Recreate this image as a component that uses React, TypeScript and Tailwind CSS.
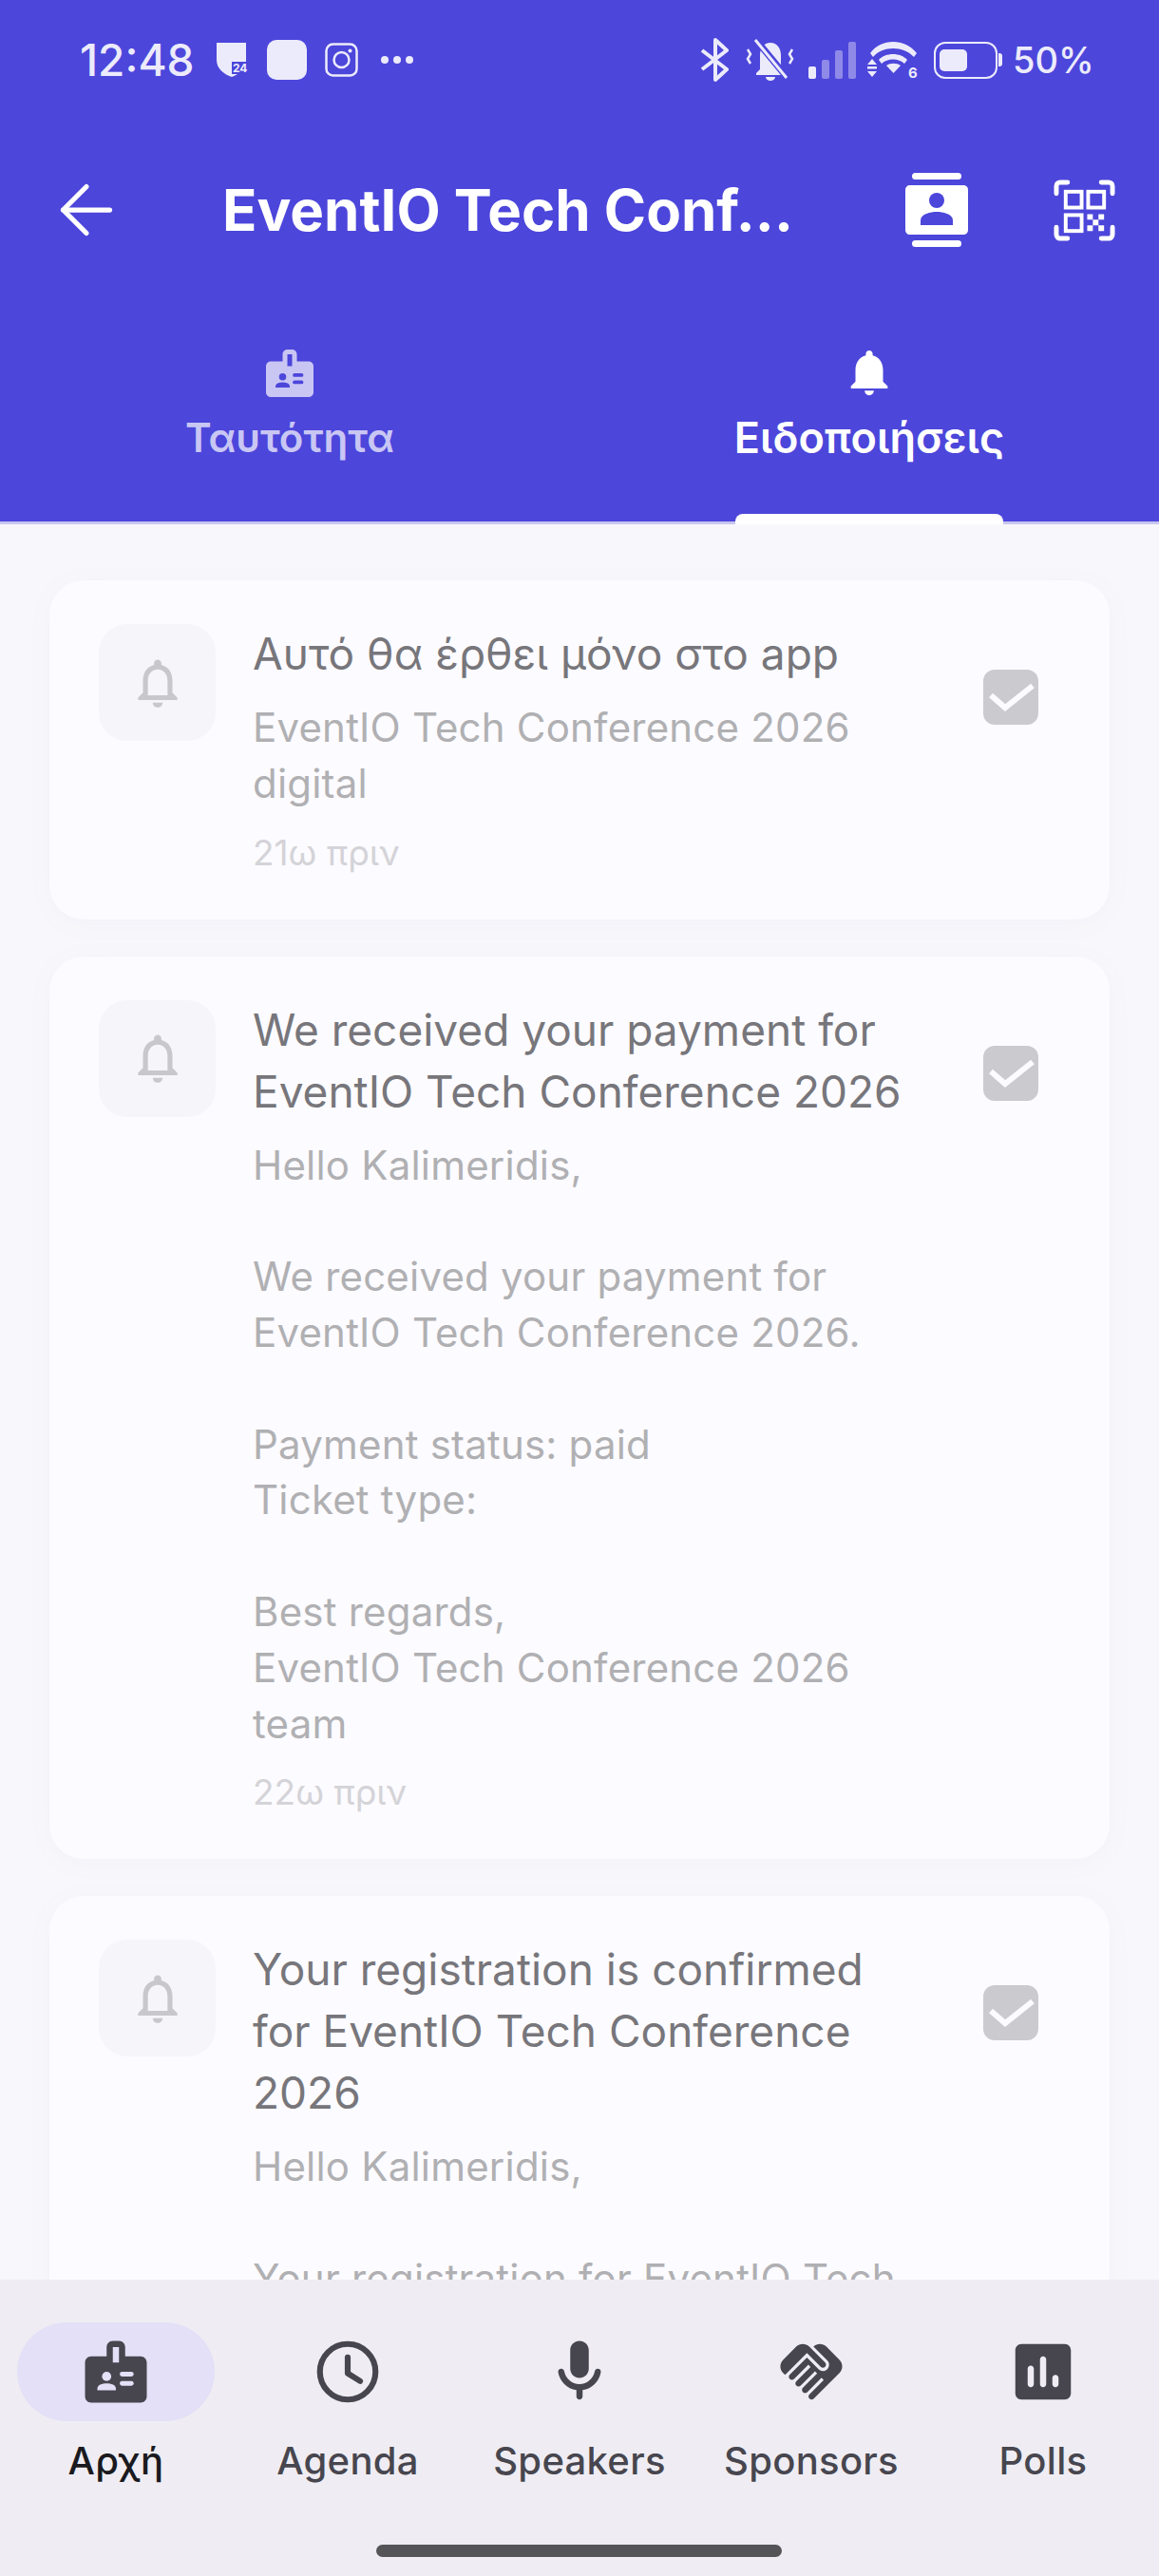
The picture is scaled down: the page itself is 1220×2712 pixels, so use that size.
import { ArrowLeft } from "lucide-react";

const BLUE = "#4c46db";

function Bell({ className }: { className?: string }) {
  return (
    <svg viewBox="0 0 24 24" className={className} fill="currentColor">
      <path d="M12 22c1.100 0 2-.9 2-2h-4c0 1.100.9 2 2 2zm6-6v-5c0-3.070-1.630-5.640-4.500-6.320V4c0-.83-.67-1.500-1.500-1.500s-1.500.67-1.500 1.500v.68C7.640 5.360 6 7.920 6 11v5l-2 2v1h16v-1l-2-2z" />
    </svg>
  );
}

function BellOutline({ className }: { className?: string }) {
  return (
    <svg viewBox="0 0 24 24" className={className} fill="currentColor">
      <path d="M12 22c1.100 0 2-.9 2-2h-4c0 1.100.9 2 2 2zm6-6v-5c0-3.070-1.630-5.640-4.500-6.320V4c0-.83-.67-1.500-1.500-1.500s-1.500.67-1.500 1.500v.68C7.640 5.360 6 7.920 6 11v5l-2 2v1h16v-1l-2-2zm-2 1H8v-6c0-2.480 1.510-4.500 4-4.500s4 2.020 4 4.500v6z" />
    </svg>
  );
}

function Badge({ className, hole }: { className?: string; hole: string }) {
  return (
    <svg viewBox="0 0 24 24" className={className}>
      <path
        fill="currentColor"
        d="M20 7h-5V4c0-1.100-.9-2-2-2h-2c-1.100 0-2 .9-2 2v3H4c-1.100 0-2 .9-2 2v11c0 1.100.9 2 2 2h16c1.100 0 2-.9 2-2V9c0-1.100-.9-2-2-2z"
      />
      <rect x="11" y="4" width="2" height="5" fill={hole} />
      <circle cx="9" cy="13.500" r="1.500" fill={hole} />
      <path d="M6 18v-.43c0-.6.36-1.150.92-1.390.64-.28 1.340-.43 2.080-.43s1.440.15 2.080.43c.55.24.92.78.92 1.390V18z" fill={hole} />
      <rect x="13.250" y="12" width="4.500" height="1.500" rx=".75" fill={hole} />
      <rect x="13.250" y="15" width="4.500" height="1.500" rx=".75" fill={hole} />
    </svg>
  );
}

function StatusBar() {
  return (
    <div className="flex h-[126px] items-center justify-between pl-[84px] pr-[73px] text-[#ecebfb]">
      <div className="flex items-center">
        <span className="w-[118px] whitespace-nowrap text-[46px] font-medium leading-none">12:48</span>
        <svg viewBox="0 0 32 36" className="ml-[26px] h-[36px] w-[32px] overflow-visible" fill="currentColor">
          <path d="M0 0h31v20c0 7-7 13-15 16C7 33 0 27 0 18z" />
          <rect x="16" y="20" width="16" height="13" fill={BLUE} />
          <text x="17" y="31" fontSize="12" fontWeight="700" fill="currentColor">24</text>
        </svg>
        <div className="ml-[21px] size-[42px] rounded-[10px] bg-[#ecebfb]" />
        <svg viewBox="0 0 35 36" className="ml-[19px] h-[36px] w-[35px]" fill="none" stroke="currentColor" strokeWidth="2.500">
          <rect x="1.500" y="1.500" width="32" height="33" rx="7" />
          <circle cx="17.500" cy="18" r="8" />
          <circle cx="26.500" cy="8.500" r="2" fill="currentColor" stroke="none" />
        </svg>
        <span className="ml-[24px] flex gap-[5px]">
          <i className="size-[8px] rounded-full bg-[#ecebfb]" />
          <i className="size-[8px] rounded-full bg-[#ecebfb]" />
          <i className="size-[8px] rounded-full bg-[#ecebfb]" />
        </span>
      </div>
      <div className="flex items-center">
        <svg viewBox="0 0 33 48" className="h-[48px] w-[33px]" fill="none" stroke="currentColor" strokeWidth="4" strokeLinejoin="round">
          <path d="M3 14l26 20-12 11V3l12 11L3 34" />
        </svg>
        <svg viewBox="0 0 53 46" className="ml-[15px] h-[46px] w-[53px]" fill="currentColor">
          <path d="M27 5c-7 0-11 6-11 13v15l-4 4v2h30v-2l-4-4V18c0-7-4-13-11-13zM22 41h10c0 2-2 4-5 4s-5-2-5-4z" />
          <path d="M11 1l33 40" stroke={BLUE} strokeWidth="7" />
          <path d="M11 2l33 40" stroke="currentColor" strokeWidth="3" />
          <path d="M3 12l3 5-3 5 3 5" fill="none" stroke="currentColor" strokeWidth="2.500" />
          <path d="M50 12l-3 5 3 5-3 5" fill="none" stroke="currentColor" strokeWidth="2.500" />
        </svg>
        <div className="ml-[14px] flex h-[39px] items-end gap-[6px]">
          <i className="h-[13px] w-[8px] rounded-[2px] bg-[#ecebfb]" />
          <i className="h-[20px] w-[8px] rounded-[2px] bg-[#8f8ae8]" />
          <i className="h-[30px] w-[8px] rounded-[2px] bg-[#8f8ae8]" />
          <i className="h-[39px] w-[8px] rounded-[2px] bg-[#8f8ae8]" />
        </div>
        <svg viewBox="0 0 55 40" className="ml-[12px] h-[40px] w-[55px] overflow-visible" fill="currentColor">
          <path d="M3 13C14-3 40-3 52 13l-3 4C38 5 16 5 6 17z" />
          <path d="M12 20c7-8 23-8 30 0l-3 4c-6-6-18-6-24 0z" />
          <path d="M20 26c4-3 11-3 15 0l-7.500 8z" />
          <path d="M5 19l5 6H0zM5 38l5-6H0zM0 27h10v2.500H0z" />
          <text x="43" y="39" fontSize="15" fontWeight="700" fill="currentColor">6</text>
        </svg>
        <div className="relative ml-[15px] mr-[6px] flex h-[39px] w-[67px] items-center rounded-[12px] border-[2.500px] border-[#ecebfb] pl-[4px]">
          <i className="h-[23px] w-[29px] rounded-[5px] bg-[#ecebfb]" />
          <i className="absolute -right-[7px] h-[14px] w-[4px] rounded-r-[3px] bg-[#ecebfb]" />
        </div>
        <span className="ml-[10px] w-[81px] whitespace-nowrap text-[38px] font-medium leading-none">50%</span>
      </div>
    </div>
  );
}

function Header() {
  return (
    <header className="flex h-[190px] items-center pl-[49px] pr-[46px] text-white">
      <ArrowLeft className="size-[84px] shrink-0" strokeWidth={1.5} />
      <h1 className="ml-[101px] flex-1 whitespace-nowrap text-[60px] font-bold leading-none">
        EventIO Tech Conf...
      </h1>
      <svg viewBox="0 0 66 78" className="h-[78px] w-[66px] shrink-0" fill="currentColor">
        <rect x="7" y="0" width="52" height="7" rx="3.500" />
        <rect x="7" y="71" width="52" height="7" rx="3.500" />
        <path d="M5 13h56c3 0 5 2 5 5v42c0 3-2 5-5 5H5c-3 0-5-2-5-5V18c0-3 2-5 5-5z" />
        <circle cx="33" cy="29" r="8" fill={BLUE} />
        <path d="M16 55v-5c0-7 11-9 17-9s17 2 17 9v5z" fill={BLUE} />
      </svg>
      <svg viewBox="0 0 66 66" className="ml-[90px] size-[65px] shrink-0" fill="none" stroke="currentColor">
        <path
          d="M3 15V7c0-2.200 1.800-4 4-4h8M51 3h8c2.200 0 4 1.800 4 4v8M3 51v8c0 2.200 1.800 4 4 4h8M51 63h8c2.200 0 4-1.800 4-4v-8"
          strokeWidth="5"
          strokeLinecap="round"
        />
        <g strokeWidth="4">
          <rect x="13" y="13" width="17" height="17" />
          <rect x="37" y="13" width="17" height="17" />
          <rect x="13" y="38" width="17" height="17" />
        </g>
        <path d="M36 37h6v6h-6zM48 37h6v6h-6zM42 43h6v6h-6zM36 49h6v6h-6zM48 49h6v6h-6z" fill="currentColor" stroke="none" />
      </svg>
    </header>
  );
}

function Tabs() {
  return (
    <div className="flex h-[236px] border-b-[3px] border-[#c9c6ef] pt-[47px]">
      <div className="flex flex-1 flex-col items-center text-[#c9c6f4]">
        <Badge className="size-[60px]" hole={BLUE} />
        <span className="mt-[12px] text-[42px] font-semibold leading-[52px]">Ταυτότητα</span>
      </div>
      <div className="relative flex flex-1 flex-col items-center text-white">
        <Bell className="size-[58px]" />
        <span className="mt-[14px] text-[45px] font-semibold leading-[52px]">Ειδοποιήσεις</span>
        <i className="absolute bottom-[-3px] h-[11px] w-[282px] rounded-t-[8px] bg-white" />
      </div>
    </div>
  );
}

type Note = { lines: string[]; body: string[]; time?: string };

const NOTES: Note[] = [
  {
    lines: ["Αυτό θα έρθει μόνο στο app"],
    body: ["EventIO Tech Conference 2026", "digital"],
    time: "21ω πριν",
  },
  {
    lines: ["We received your payment for", "EventIO Tech Conference 2026"],
    body: [
      "Hello Kalimeridis,",
      "",
      "We received your payment for",
      "EventIO Tech Conference 2026.",
      "",
      "Payment status: paid",
      "Ticket type:",
      "",
      "Best regards,",
      "EventIO Tech Conference 2026",
      "team",
    ],
    time: "22ω πριν",
  },
  {
    lines: ["Your registration is confirmed", "for EventIO Tech Conference", "2026"],
    body: ["Hello Kalimeridis,", "", "Your registration for EventIO Tech", "Conference 2026 is confirmed."],
  },
];

function NoteCard({ note }: { note: Note }) {
  return (
    <article className="flex shrink-0 rounded-[36px] bg-[#fcfbff] pb-[44px] pl-[52px] pr-[75px] pt-[45px] shadow-[0_4px_30px_rgba(70,70,140,0.035)]">
      <div className="mt-[1px] flex size-[123px] shrink-0 items-center justify-center rounded-[30px] bg-[#f6f5fa] text-[#c8c8cc]">
        <BellOutline className="size-[62px]" />
      </div>
      <div className="ml-[39px] flex-1">
        <div className="text-[#77767b]">
          {note.lines.map((l) => (
            <p key={l} className="whitespace-nowrap text-[46px] font-normal leading-[65px]">
              {l}
            </p>
          ))}
        </div>
        <div className="mt-[16px] text-[#b0b0b3]">
          {note.body.map((l, i) => (
            <p key={i} className="h-[58.800px] whitespace-pre text-[42px] tracking-[0.2px] leading-[58.800px]">
              {l}
            </p>
          ))}
        </div>
        {note.time && <p className="mt-[17px] text-[37px] leading-[52px] text-[#d4d3d8]">{note.time}</p>}
      </div>
      <div className="mt-[49px] flex size-[58px] shrink-0 items-center justify-center rounded-[12px] bg-[#cbcace]">
        <svg viewBox="0 0 58 58" className="size-[58px]" fill="none" stroke="#fcfbff" strokeWidth="6">
          <path d="M8 27l15 13 29-23" />
        </svg>
      </div>
    </article>
  );
}

const NAV = ["Αρχή", "Agenda", "Speakers", "Sponsors", "Polls"];

function NavIcon({ name }: { name: string }) {
  const c = "size-[78px] text-[#47464f]";
  if (name === "Αρχή") return <Badge className={c} hole="#e3e0f7" />;
  if (name === "Agenda")
    return (
      <svg viewBox="0 0 24 24" className={c} fill="none" stroke="currentColor" strokeWidth="1.900" strokeLinecap="round" strokeLinejoin="round">
        <circle cx="12" cy="12" r="9" />
        <path d="M12 7.300v5.200l4 2.500" />
      </svg>
    );
  if (name === "Speakers")
    return (
      <svg viewBox="0 0 24 24" className={c} fill="currentColor">
        <path d="M12 14c1.660 0 3-1.340 3-3V5c0-1.660-1.340-3-3-3S9 3.340 9 5v6c0 1.660 1.340 3 3 3zm5.910-3c-.49 0-.9.36-.98.85C16.520 14.200 14.470 16 12 16s-4.520-1.800-4.930-4.150c-.08-.49-.49-.85-.98-.85-.61 0-1.090.54-1 1.140.49 3 2.890 5.350 5.910 5.780V20c0 .55.45 1 1 1s1-.45 1-1v-2.080c3.020-.43 5.420-2.780 5.910-5.780.1-.6-.39-1.140-1-1.140z" />
      </svg>
    );
  if (name === "Sponsors")
    return (
      <svg viewBox="0 0 24 24" className={c} fill="currentColor">
        <path d="M16.480 10.410c-.39.39-1.040.39-1.430 0l-4.470-4.460-7.050 7.040-.66-.63c-1.170-1.170-1.170-3.070 0-4.240l4.240-4.240c1.170-1.170 3.070-1.170 4.240 0L16.480 9c.39.39.39 1.020 0 1.410z" />
        <path d="M17.180 8.290c.78.78.78 2.050 0 2.830-1.270 1.270-2.610.22-2.830 0l-3.760-3.760-5.570 5.570c-.39.39-.39 1.020 0 1.410.39.39 1.020.39 1.420 0l4.620-4.620.71.71-4.620 4.620c-.39.39-.39 1.020 0 1.410.39.39 1.020.39 1.420 0l4.620-4.620.71.71-4.620 4.620c-.39.39-.39 1.020 0 1.410.39.39 1.020.39 1.410 0l4.620-4.620.71.71-4.620 4.620c-.39.39-.39 1.020 0 1.410.39.39 1.020.39 1.410 0l8.320-8.340c1.170-1.170 1.170-3.070 0-4.240l-4.240-4.240c-1.150-1.150-3.010-1.170-4.180-.06l4.470 4.470z" />
      </svg>
    );
  return (
    <svg viewBox="0 0 24 24" className={c} fill="currentColor">
      <path d="M19 3H5c-1.100 0-2 .9-2 2v14c0 1.100.9 2 2 2h14c1.100 0 2-.9 2-2V5c0-1.100-.9-2-2-2zM8 17c-.55 0-1-.45-1-1v-5c0-.55.45-1 1-1s1 .45 1 1v5c0 .55-.45 1-1 1zm4 0c-.55 0-1-.45-1-1V8c0-.55.45-1 1-1s1 .45 1 1v8c0 .55-.45 1-1 1zm4 0c-.55 0-1-.45-1-1v-2c0-.55.45-1 1-1s1 .45 1 1v2c0 .55-.45 1-1 1z" />
    </svg>
  );
}

function BottomNav() {
  return (
    <nav className="absolute inset-x-0 bottom-0 h-[312px] bg-[#efedf3]">
      <div className="grid grid-cols-5 pt-[45px]">
        {NAV.map((n, i) => (
          <div key={n} className="flex flex-col items-center">
            <div className={`flex h-[104px] w-[208px] items-center justify-center rounded-full ${i === 0 ? "bg-[#e3e0f7]" : ""}`}>
              <NavIcon name={n} />
            </div>
            <span className={`mt-[18px] whitespace-nowrap text-[40px] font-medium tracking-[0.3px] leading-[48px] ${i === 0 ? "text-[#1a1a20]" : "text-[#47464f]"}`}>
              {n}
            </span>
          </div>
        ))}
      </div>
      <div className="absolute bottom-[20px] left-[396px] h-[13px] w-[427px] rounded-full bg-[#555558]" />
    </nav>
  );
}

export default function App() {
  return (
    <div className="relative h-[2712px] w-[1220px] overflow-hidden bg-[#f8f8fc] font-['Inter','Noto_Sans',sans-serif]">
      <div className="bg-[#4c46db]">
        <StatusBar />
        <Header />
        <Tabs />
      </div>
      <main className="flex flex-col gap-[39px] px-[52px] pt-[59px]">
        {NOTES.map((n) => (
          <NoteCard key={n.lines[0]} note={n} />
        ))}
      </main>
      <BottomNav />
    </div>
  );
}
